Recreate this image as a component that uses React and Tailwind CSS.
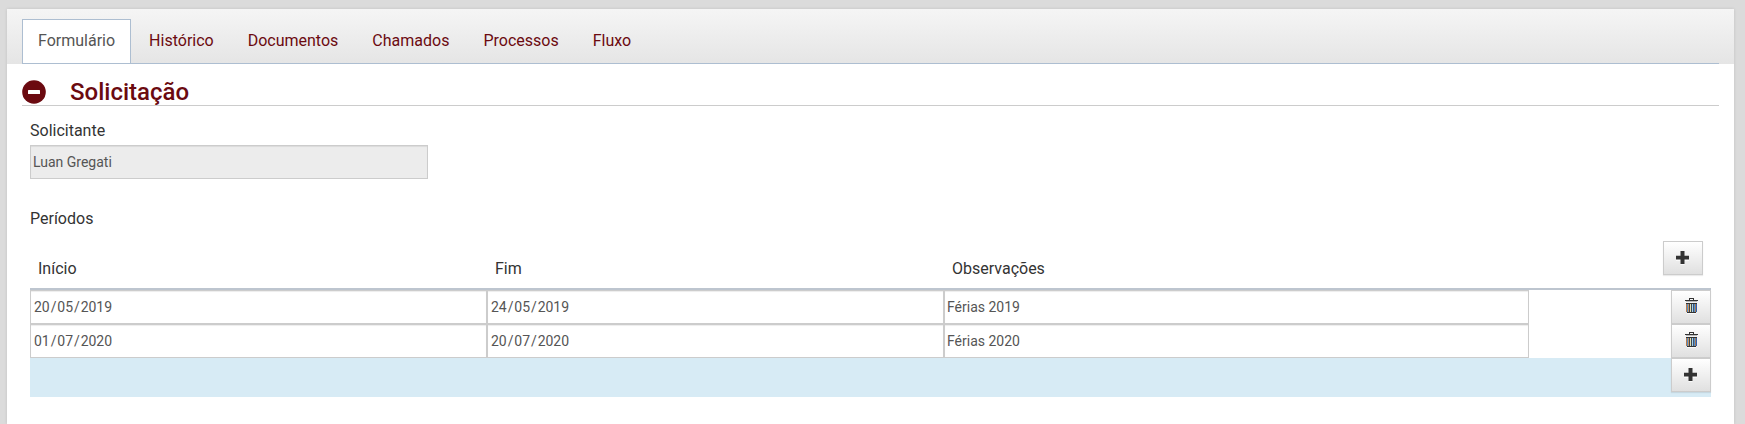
const tabs = ['Formulário', 'Histórico', 'Documentos', 'Chamados', 'Processos', 'Fluxo'];

const rows = [
  ['20/05/2019', '24/05/2019', 'Férias 2019'],
  ['01/07/2020', '20/07/2020', 'Férias 2020'],
];

function PlusIcon() {
  return (
    <svg width="13" height="14" viewBox="0 0 13 14" className="block">
      <path d="M4.5 1h4v4H13v5H8.500v4h-4v-4H0V5h4.500z" fill="#fff" opacity=".7" />
      <path d="M4.500 0h4v4.700H13v3.800H8.500V13h-4V8.500H0V4.700h4.500z" fill="#333" />
    </svg>
  );
}

function TrashIcon() {
  return (
    <svg width="13" height="16" viewBox="0 0 13 16" className="block" shapeRendering="crispEdges">
      <path d="M4 0h5v1H4zM4 1h1v1H4zM8 1h1v1H8zM0 2h13v1H0z" fill="#333" />
      <path d="M1 3h11v1H1z" fill="#bbb" />
      <path d="M1 5h11v1H1zM2 14h9v1H2z" fill="#333" />
      <path d="M1 6h1v8H1z" fill="#b87a4a" />
      <path d="M2 6h1v8H2zM9 6h1v8H9z" fill="#4f8fce" />
      <path d="M3 6h1v8H3z" fill="#c9955e" />
      <path d="M4 6h1v8H4zM6 6h1v8H6z" fill="#3d4650" />
      <path d="M5 6h1v8H5z" fill="#e3dcae" />
      <path d="M7 6h1v8H7z" fill="#9fd0ee" />
      <path d="M8 6h1v8H8z" fill="#4b5566" />
      <path d="M10 6h1v8h-1z" fill="#a8794f" />
      <path d="M11 6h1v8h-1z" fill="#2f5fb0" />
      <path d="M2 15h9v1H2z" fill="#fff" opacity=".8" />
    </svg>
  );
}

function IconButton({ label, children }) {
  return (
    <button
      aria-label={label}
      className="flex h-[34px] w-10 shrink-0 border border-[#ccc] bg-linear-to-b from-white to-[#e0e0e0] pl-3 shadow-[0_1px_1px_rgba(0,0,0,0.08)]"
    >
      {children}
    </button>
  );
}

function Cell({ className, children }) {
  return (
    <div
      className={
        'h-[34px] shrink-0 border border-[#ccc] bg-white text-sm leading-8 text-[#555] shadow-[inset_0_1px_1px_rgba(0,0,0,0.075)] ' +
        className
      }
    >
      {children}
    </div>
  );
}

function DateText({ value }) {
  const [day, month, year] = value.split('/');
  return (
    <>
      {day}
      <span className="px-[0.9px]">/</span>
      {month}
      <span className="px-[0.9px]">/</span>
      {year}
    </>
  );
}

export default function App() {
  return (
    <div className="h-[424px] overflow-hidden bg-[#dbdbdb] pt-[9px] pr-[11px] pl-[7px] font-['Roboto',sans-serif] text-base text-[#333]">
      <main className="h-full bg-white shadow-[0_0_3px_rgba(0,0,0,0.12)]">
        <header className="h-[55px] bg-linear-to-b from-[#f5f5f5] to-[#e5e5e5] px-[15px] pt-2.5">
          <nav className="flex h-[45px] gap-0.5 border-b border-[#adbed1]">
            {tabs.map((tab, i) => (
              <a
                key={tab}
                className={
                  i === 0
                    ? 'h-11 border border-b-0 border-[#adbed1] bg-white px-[15px] pt-px leading-10 text-[#555]'
                    : 'h-11 px-4 pt-0.5 leading-10 text-[#6b0a10]'
                }
              >
                {tab}
              </a>
            ))}
          </nav>
        </header>
        <section className="px-[15px]">
          <div className="flex h-[42px] items-start border-b border-[#ccc] text-[#6b0a10]">
            <svg width="24" height="24" viewBox="0 0 24 24" className="mt-4 shrink-0">
              <circle cx="12" cy="12" r="11.8" fill="#6b0a10" />
              <rect x="6" y="10" width="12" height="4" rx=".5" fill="#fff" />
            </svg>
            <h1 className="pt-[14px] pl-6 text-2xl leading-7 font-medium">Solicitação</h1>
          </div>
          <div className="px-2 pt-[13px]">
            <label className="block h-[26px] leading-6">Solicitante</label>
            <div className="h-[34px] w-[398px] border border-[#ccc] bg-[#ececec] pl-0.5 text-sm leading-8 text-[#555] shadow-[inset_0_1px_1px_rgba(0,0,0,0.075)]">
              Luan Gregati
            </div>
            <h2 className="mt-7 h-[34px] leading-6">Períodos</h2>
            <div className="flex h-[49px] border-b-2 border-[#bdc5cf]">
              <div className="w-[457px] pt-4 pl-2 leading-6">Início</div>
              <div className="w-[457px] pt-4 pl-2 leading-6">Fim</div>
              <div className="flex-1 pt-4 pl-2 leading-6">Observações</div>
              <div className="pr-2">
                <IconButton label="Adicionar período">
                  <span className="pt-[9px]"><PlusIcon /></span>
                </IconButton>
              </div>
            </div>
            {rows.map(([start, end, note]) => (
              <div key={start} className="flex">
                <Cell className="w-[457px] pl-[3px]"><DateText value={start} /></Cell>
                <Cell className="w-[457px] pl-[3px]"><DateText value={end} /></Cell>
                <Cell className="w-[585px] pl-0.5">{note}</Cell>
                <div className="ml-auto">
                  <IconButton label="Excluir período">
                    <span className="pt-[7px] pl-px"><TrashIcon /></span>
                  </IconButton>
                </div>
              </div>
            ))}
            <div className="flex h-[39px] items-start justify-end bg-[#d7ebf5]">
              <IconButton label="Adicionar linha">
                <span className="pt-[9px]"><PlusIcon /></span>
              </IconButton>
            </div>
          </div>
        </section>
      </main>
    </div>
  );
}
